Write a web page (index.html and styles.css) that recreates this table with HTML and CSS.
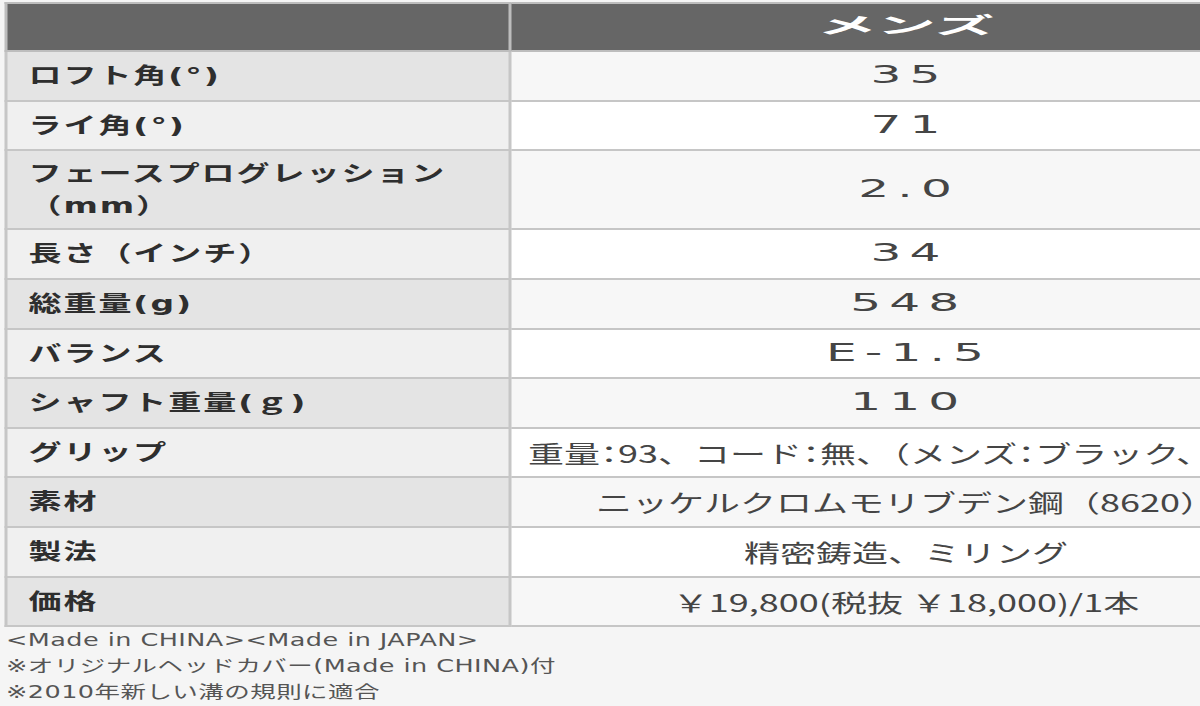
FILE: index.html
```html
<!DOCTYPE html>
<html lang="ja">
<head>
<meta charset="utf-8">
<title>スペック</title>
<link rel="stylesheet" href="styles.css">
</head>
<body>
<div class="page">
  <table class="spec">
    <thead>
      <tr>
        <th class="corner"></th>
        <th class="col-head"><span class="col-title">メンズ</span></th>
      </tr>
    </thead>
    <tbody>
      <tr class="odd"><th>ロフト角(°)</th><td><span class="num">35</span></td></tr>
      <tr class="even"><th>ライ角(°)</th><td><span class="num">71</span></td></tr>
      <tr class="odd"><th class="two-line">フェースプログレッション（mm）</th><td><span class="num">2.0</span></td></tr>
      <tr class="even"><th>長さ（インチ）</th><td><span class="num">34</span></td></tr>
      <tr class="odd"><th>総重量(g)</th><td><span class="num">548</span></td></tr>
      <tr class="even"><th>バランス</th><td><span class="num">E-1.5</span></td></tr>
      <tr class="odd"><th>シャフト重量(ｇ)</th><td><span class="num">110</span></td></tr>
      <tr class="even"><th>グリップ</th><td class="grip">重量<span class="colon">：</span>93、コード<span class="colon">：</span>無、（メンズ<span class="colon">：</span>ブラック、白）</td></tr>
      <tr class="odd"><th>素材</th><td>ニッケルクロムモリブデン鋼（8620）</td></tr>
      <tr class="even"><th>製法</th><td>精密鋳造、ミリング</td></tr>
      <tr class="odd"><th>価格</th><td>￥19,800(税抜 ￥18,000)/1本</td></tr>
    </tbody>
  </table>
  <div class="notes">
    <p>&lt;Made in CHINA&gt;&lt;Made in JAPAN&gt;</p>
    <p>※オリジナルヘッドカバー(Made in CHINA)付</p>
    <p>※2010年新しい溝の規則に適合</p>
  </div>
</div>
</body>
</html>
```
FILE: styles.css
```css
html, body {
  margin: 0;
  padding: 0;
  overflow: hidden;
  background: #f5f5f5;
}

body {
  width: 1200px;
  height: 706px;
  font-family: "DejaVu Sans", "Noto Sans CJK JP", sans-serif;
}

.page {
  width: 866px;
  padding: 2px 0 0 3px;
  transform: scaleX(1.5);
  transform-origin: 0 0;
}

.spec {
  width: 866px;
  border-collapse: collapse;
  table-layout: fixed;
  border: 2px solid #c6c6c6;
}

.spec th,
.spec td {
  border: 2px solid #c6c6c6;
}

.spec thead th {
  background: #666666;
  height: 37px;
  padding: 0 0 9px;
  border-color: #bdbdbd;
}

.spec .corner {
  width: 334px;
}

.col-head {
  text-align: center;
}

.col-title {
  display: inline-block;
  color: #ffffff;
  font-family: "Noto Sans CJK JP", sans-serif;
  font-size: 22px;
  font-weight: bold;
  line-height: 30px;
  transform: scaleX(1.8);
}

.spec tbody th {
  text-align: left;
  font-weight: bold;
  font-size: 22px;
  letter-spacing: 1.3px;
  color: #2e2e2e;
  line-height: 31.6px;
  padding: 8px 10px 8px 14px;
  font-family: "DejaVu Sans", "Noto Sans CJK JP", sans-serif;
}

.spec tbody th.two-line {
  padding-top: 7px;
  padding-bottom: 7px;
}

.spec tbody td {
  text-align: center;
  font-size: 24px;
  color: #454545;
  line-height: 31.6px;
  padding: 8px 0;
  font-family: "Noto Sans CJK JP", sans-serif;
}

.spec td.grip {
  white-space: nowrap;
}

.colon {
  font-feature-settings: "halt";
}

.num {
  display: inline-block;
  vertical-align: top;
  font-family: "DejaVu Sans", sans-serif;
  font-size: 24px;
  line-height: 31.6px;
  letter-spacing: 4px;
  margin-right: -4px;
  transform: scaleX(1.35);
}

.odd th { background: #e4e4e4; }
.odd td { background: #f7f7f7; }
.even th { background: #f0f0f0; }
.even td { background: #ffffff; }

.notes {
  padding-left: 1px;
  color: #555555;
  font-size: 17px;
  letter-spacing: 0.3px;
  line-height: 26px;
}

.notes p {
  margin: 0;
}
```
